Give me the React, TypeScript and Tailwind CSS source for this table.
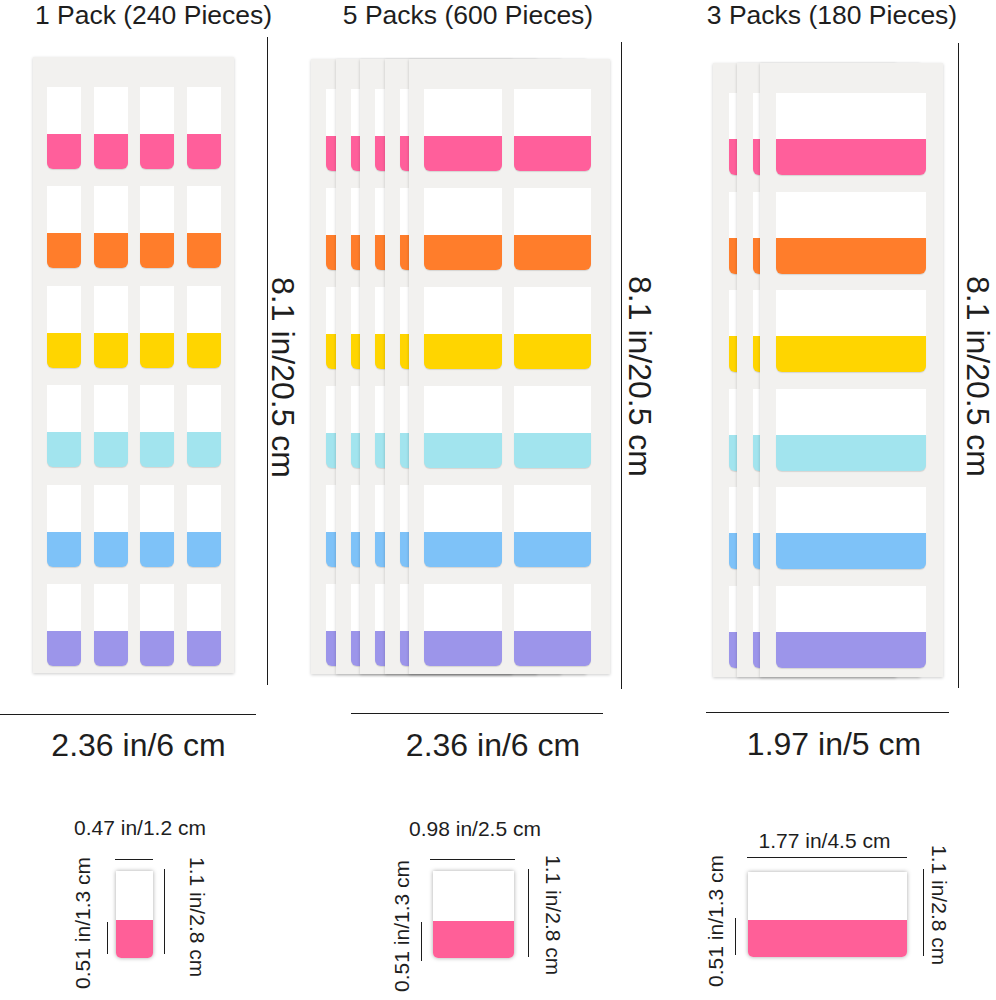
import type { ReactNode } from 'react'

// tab colours, top row to bottom row
const SWATCHES = [
  'bg-[#ff5f9b]',
  'bg-[#ff7d2b]',
  'bg-[#ffd500]',
  'bg-[#a2e4ee]',
  'bg-[#7ec2f8]',
  'bg-[#9c95ea]',
]

interface SheetProps {
  box: string
  rowGap: string
  colGap: string
  cols: number
  tab: string
  band: string
  className?: string
}

function Sheet({ box, rowGap, colGap, cols, tab, band, className = '' }: SheetProps) {
  return (
    <div className={`shrink-0 bg-[#f2f1ef] pt-[30px] shadow-[0_1px_3px_rgba(0,0,0,0.2)] ${box} ${className}`}>
      <div className={`flex flex-col ${rowGap}`}>
        {SWATCHES.map((swatch) => (
          <div key={swatch} className={`flex ${colGap}`}>
            {Array.from({ length: cols }).map((_, i) => (
              <div key={i} className={`flex flex-col ${tab}`}>
                <div className="flex-1 bg-white" />
                <div className={`rounded-b-[6px] shadow-[0_1px_1px_rgba(0,0,0,0.12)] ${band} ${swatch}`} />
              </div>
            ))}
          </div>
        ))}
      </div>
    </div>
  )
}

function VText({ children, className = '' }: { children: ReactNode; className?: string }) {
  return (
    <p className={`shrink-0 whitespace-nowrap [writing-mode:vertical-rl] ${className}`}>{children}</p>
  )
}

function VLine({ className }: { className: string }) {
  return <div className={`w-px shrink-0 bg-[#1c1c1c] ${className}`} />
}

function HLine({ className }: { className: string }) {
  return <div className={`h-px shrink-0 bg-[#1c1c1c] ${className}`} />
}

function SingleTab({ box, band }: { box: string; band: string }) {
  return (
    <div className={`flex flex-col rounded-b-[5px] shadow-[0_0_4px_rgba(0,0,0,0.35)] ${box}`}>
      <div className="flex-1 bg-white" />
      <div className={`rounded-b-[5px] bg-[#ff5f98] ${band}`} />
    </div>
  )
}

export default function App() {
  return (
    <div className="flex h-[1000px] w-[996px] overflow-hidden bg-white font-['Liberation_Sans',Arial,sans-serif] text-[#1e1e1e]">
      {/* 1 pack */}
      <div className="flex w-[300px] shrink-0 flex-col">
        <h2 className="w-[307px] text-center text-[26.5px] leading-[30px]">1 Pack (240 Pieces)</h2>
        <div className="mt-[7px] flex items-start">
          <Sheet
            className="ml-[33px] mt-[20px]"
            box="w-[201px] h-[616px] pl-[14px]"
            rowGap="gap-[17.4px]"
            colGap="gap-[12.5px]"
            cols={4}
            tab="w-[34px] h-[82px]"
            band="h-[35px]"
          />
          <VLine className="ml-[33px] h-[648px]" />
          <VText className="ml-[2.6px] mt-[240px] text-[32px] leading-[24px]">8.1 in/20.5 cm</VText>
        </div>
        <HLine className="mt-[29px] w-[256px]" />
        <p className="mt-[14px] w-[277px] text-center text-[32px] leading-none">2.36 in/6 cm</p>
        <p className="mt-[56px] w-[280px] text-center text-[21px] leading-none">0.47 in/1.2 cm</p>
        <div className="mt-[19px] flex items-start">
          <VText className="ml-[71.5px] rotate-180 text-[21px] leading-none">0.51 in/1.3 cm</VText>
          <VLine className="ml-[14.5px] mt-[65px] h-[32px]" />
          <div className="ml-[7px] flex w-[38px] shrink-0 flex-col">
            <HLine className="mt-[2px] w-[38px]" />
            <SingleTab box="ml-px mt-[11px] w-[37px] h-[87px]" band="h-[38px]" />
          </div>
          <VLine className="ml-[11px] mt-[12px] h-[85px]" />
          <VText className="ml-[21.5px] text-[21px] leading-none">1.1 in/2.8 cm</VText>
        </div>
      </div>

      {/* 5 packs */}
      <div className="flex w-[360px] shrink-0 flex-col">
        <h2 className="w-[336px] text-center text-[26.5px] leading-[30px]">5 Packs (600 Pieces)</h2>
        <div className="mt-[12px] flex items-start">
          <div className="ml-[11px] mt-[17px] flex shrink-0">
            {[0, 1, 2, 3, 4].map((n) => (
              <Sheet
                key={n}
                className={n === 0 ? '' : '-ml-[176.5px]'}
                box="w-[201px] h-[615px] pl-[15px]"
                rowGap="gap-[17px]"
                colGap="gap-[12px]"
                cols={2}
                tab="w-[77.5px] h-[82px]"
                band="h-[35px]"
              />
            ))}
          </div>
          <VLine className="ml-[11px] h-[647px]" />
          <VText className="ml-[5.6px] mt-[234px] text-[32px] leading-[24px]">8.1 in/20.5 cm</VText>
        </div>
        <HLine className="ml-[51px] mt-[24px] w-[252px]" />
        <p className="mt-[15px] w-[386px] text-center text-[32px] leading-none">2.36 in/6 cm</p>
        <p className="mt-[57px] w-[350px] text-center text-[21px] leading-none">0.98 in/2.5 cm</p>
        <div className="mt-[16px] flex items-start">
          <VText className="ml-[90.5px] mt-[5px] rotate-180 text-[21px] leading-none">0.51 in/1.3 cm</VText>
          <VLine className="ml-[9.5px] mt-[67px] h-[39px]" />
          <div className="ml-[8px] flex w-[85px] shrink-0 flex-col">
            <HLine className="mt-[4px] w-[85px]" />
            <SingleTab box="ml-[3px] mt-[11px] w-[81px] h-[87px]" band="h-[37px]" />
          </div>
          <VLine className="ml-[13px] mt-[14px] h-[88px]" />
          <VText className="ml-[13.5px] text-[21px] leading-none">1.1 in/2.8 cm</VText>
        </div>
      </div>

      {/* 3 packs */}
      <div className="flex w-[336px] shrink-0 flex-col">
        <h2 className="w-[344px] text-center text-[26.5px] leading-[30px]">3 Packs (180 Pieces)</h2>
        <div className="mt-[13px] flex items-start">
          <div className="ml-[53px] mt-[20px] flex shrink-0">
            {[0, 1, 2].map((n) => (
              <Sheet
                key={n}
                className={n === 0 ? '' : '-ml-[159.5px]'}
                box="w-[183px] h-[614px] pl-[16px]"
                rowGap="gap-[16.6px]"
                colGap="gap-0"
                cols={1}
                tab="w-[150px] h-[82px]"
                band="h-[36px]"
              />
            ))}
          </div>
          <VLine className="ml-[15px] h-[645px]" />
          <VText className="ml-[7px] mt-[233px] text-[32px] leading-[24px]">8.1 in/20.5 cm</VText>
        </div>
        <HLine className="ml-[46px] mt-[24px] w-[243px]" />
        <p className="mt-[15px] w-[348px] text-center text-[32px] leading-none">1.97 in/5 cm</p>
        <p className="mt-[70px] w-[329px] text-center text-[21px] leading-none">1.77 in/4.5 cm</p>
        <div className="-mt-[6px] flex items-start">
          <VText className="ml-[44.5px] mt-[10px] rotate-180 text-[21px] leading-none">0.51 in/1.3 cm</VText>
          <VLine className="ml-[9.5px] mt-[73px] h-[37px]" />
          <div className="ml-[11px] flex w-[160px] shrink-0 flex-col">
            <HLine className="mt-[12px] w-[160px]" />
            <SingleTab box="ml-px mt-[14px] w-[159px] h-[85px]" band="h-[37px]" />
          </div>
          <VLine className="ml-[16px] mt-[24px] h-[87px]" />
          <VText className="ml-[4.5px] text-[21px] leading-none">1.1 in/2.8 cm</VText>
        </div>
      </div>
    </div>
  )
}
